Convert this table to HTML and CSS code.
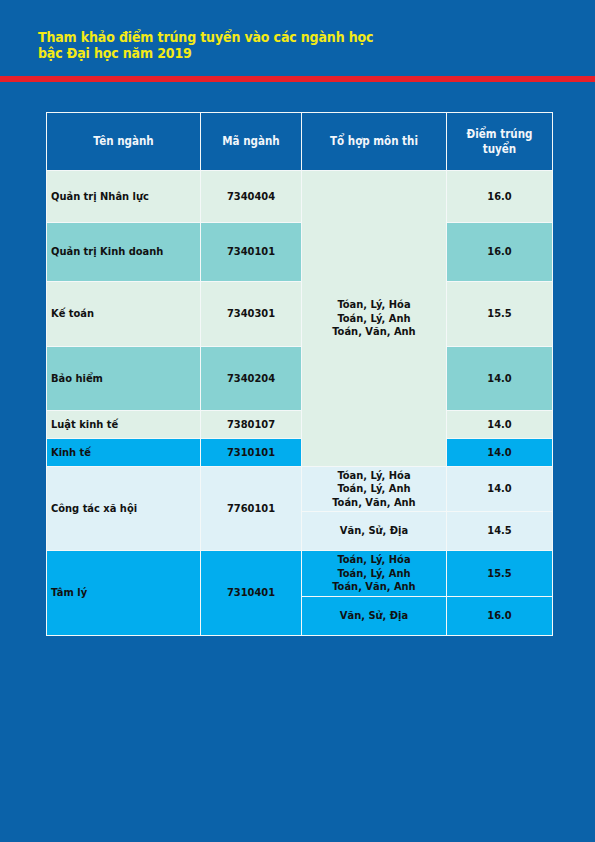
FILE: index.html
```html
<!DOCTYPE html>
<html lang="vi">
<head>
<meta charset="utf-8">
<link rel="stylesheet" href="styles.css">
</head>
<body>
<header class="top">
  <h1 class="title">Tham khảo điểm trúng tuyển vào các ngành học<br>bậc Đại học năm 2019</h1>
</header>
<div class="stripe"></div>
<main class="wrap">
  <table class="scores">
    <colgroup>
      <col class="c1"><col class="c2"><col class="c3"><col class="c4">
    </colgroup>
    <thead>
      <tr class="h-head">
        <th>Tên ngành</th>
        <th>Mã ngành</th>
        <th>Tổ hợp môn thi</th>
        <th>Điểm trúng<br>tuyển</th>
      </tr>
    </thead>
    <tbody>
      <tr class="mint h1">
        <td class="name">Quản trị Nhân lực</td>
        <td>7340404</td>
        <td class="mint" rowspan="6">Tóan, Lý, Hóa<br>Toán, Lý, Anh<br>Toán, Văn, Anh</td>
        <td>16.0</td>
      </tr>
      <tr class="teal h2">
        <td class="name">Quản trị Kinh doanh</td>
        <td>7340101</td>
        <td>16.0</td>
      </tr>
      <tr class="mint h3">
        <td class="name">Kế toán</td>
        <td>7340301</td>
        <td>15.5</td>
      </tr>
      <tr class="teal h4">
        <td class="name">Bảo hiểm</td>
        <td>7340204</td>
        <td>14.0</td>
      </tr>
      <tr class="mint h5">
        <td class="name">Luật kinh tế</td>
        <td>7380107</td>
        <td>14.0</td>
      </tr>
      <tr class="cyan h5">
        <td class="name">Kinh tế</td>
        <td>7310101</td>
        <td>14.0</td>
      </tr>
      <tr class="sky h7a">
        <td class="name" rowspan="2">Công tác xã hội</td>
        <td rowspan="2">7760101</td>
        <td>Tóan, Lý, Hóa<br>Toán, Lý, Anh<br>Toán, Văn, Anh</td>
        <td>14.0</td>
      </tr>
      <tr class="sky h7b">
        <td>Văn, Sử, Địa</td>
        <td>14.5</td>
      </tr>
      <tr class="cyan h8a">
        <td class="name" rowspan="2">Tâm lý</td>
        <td rowspan="2">7310401</td>
        <td>Toán, Lý, Hóa<br>Toán, Lý, Anh<br>Toán, Văn, Anh</td>
        <td>15.5</td>
      </tr>
      <tr class="cyan h7b">
        <td>Văn, Sử, Địa</td>
        <td>16.0</td>
      </tr>
    </tbody>
  </table>
</main>
</body>
</html>
```
FILE: styles.css
```css
html, body {
  margin: 0;
  padding: 0;
}
body {
  background: #0b62a9;
  width: 595px;
  height: 842px;
  font-family: "DejaVu Sans Condensed", "DejaVu Sans", sans-serif;
  overflow: hidden;
}
.top {
  padding: 29px 0 0 38px;
  height: 47px;
  box-sizing: border-box;
}
.title {
  margin: 0;
  color: #f4ea16;
  font-size: 14px;
  letter-spacing: -0.15px;
  line-height: 16px;
  font-weight: bold;
}
.stripe {
  height: 6px;
  background: #e8202a;
  margin-top: 29px;
}
.wrap {
  padding: 30px 0 0 46px;
}
.scores {
  width: 506px;
  border-collapse: collapse;
  table-layout: fixed;
  border: 1px solid #e6e6e6;
  font-size: 11px;
  font-weight: bold;
  color: #111;
}
.c1 { width: 154px; }
.c2 { width: 101px; }
.c3 { width: 145px; }
.c4 { width: 106px; }
.scores th,
.scores td {
  border: 1.5px solid #f4f8f8;
  text-align: center;
  vertical-align: middle;
  padding: 0 4px;
  line-height: 13.5px;
}
.scores th {
  color: #f2f6fa;
  font-size: 11.5px;
  line-height: 15px;
  background: #0b62a9;
}
.scores td.name {
  text-align: left;
  padding-left: 4px;
}
.h-head { height: 58px; }
.h1 { height: 52px; }
.h2 { height: 59px; }
.h3 { height: 65px; }
.h4 { height: 64px; }
.h5 { height: 28px; }
.h7a { height: 45px; }
.h7b { height: 39px; }
.h8a { height: 46px; }
.mint, .mint td { background: #dff0e7; }
.teal td { background: #87d2d2; }
.teal td.mint { background: #dff0e7; }
.cyan td { background: #02adee; }
.sky td { background: #dff1f7; }
```
